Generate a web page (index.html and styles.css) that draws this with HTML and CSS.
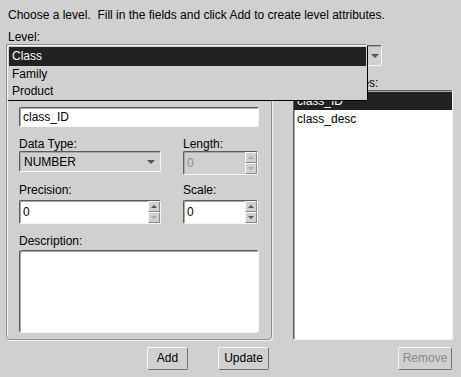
FILE: index.html
```html
<!DOCTYPE html>
<html>
<head>
    <title>Create Level Attributes</title>
    <link rel="stylesheet" href="styles.css">
</head>
<body>

<div class="screen">
    <p class="intro">Choose a level.&nbsp; Fill in the fields and click Add to create level attributes.</p>
    <div class="level-label">Level:</div>

    <!-- the value part is covered by the open popup below -->
    <div class="combo level-combo">
        <div class="combo-value selected"></div>
        <div class="combo-btn"><span class="arrow-down"></span></div>
    </div>

    <div class="main">
        <div class="panel">
            <div class="field name-field">class_ID</div>

            <div class="pair first-pair">
                <div class="col-left">
                    <div class="label">Data Type:</div>
                    <div class="combo type-combo">
                        <div class="combo-value">NUMBER</div>
                        <span class="arrow-down"></span>
                    </div>
                </div>
                <div class="col-right">
                    <div class="label">Length:</div>
                    <div class="spinner disabled">
                        <div class="spin-value">0</div>
                        <div class="spin-btns">
                            <div class="spin-btn"><span class="arrow-up off"></span></div>
                            <div class="spin-btn"><span class="arrow-dn off"></span></div>
                        </div>
                    </div>
                </div>
            </div>

            <div class="pair second-pair">
                <div class="col-left">
                    <div class="label">Precision:</div>
                    <div class="spinner">
                        <div class="spin-value">0</div>
                        <div class="spin-btns">
                            <div class="spin-btn"><span class="arrow-up"></span></div>
                            <div class="spin-btn"><span class="arrow-dn off"></span></div>
                        </div>
                    </div>
                </div>
                <div class="col-right">
                    <div class="label">Scale:</div>
                    <div class="spinner">
                        <div class="spin-value">0</div>
                        <div class="spin-btns">
                            <div class="spin-btn"><span class="arrow-up"></span></div>
                            <div class="spin-btn"><span class="arrow-dn"></span></div>
                        </div>
                    </div>
                </div>
            </div>

            <div class="label desc-label">Description:</div>
            <div class="field desc-field"></div>
        </div>

        <div class="attrs">
            <div class="label">Level Attributes:</div>
            <ul class="list">
                <li class="selected">class_ID</li>
                <li>class_desc</li>
            </ul>
        </div>
    </div>

    <div class="buttons">
        <div class="btn-group">
            <div class="btn add-btn">Add</div>
            <div class="btn update-btn">Update</div>
        </div>
        <div class="btn remove-btn disabled">Remove</div>
    </div>

    <!-- open dropdown of the Level combo -->
    <ul class="popup">
        <li class="selected">Class</li>
        <li>Family</li>
        <li>Product</li>
    </ul>
</div>

</body>
</html>
```

FILE: styles.css
```css
body {
    margin: 0;
    background-color: #d0d0d0;
    font-family: "Liberation Sans", Arial, sans-serif;
    font-size: 12px;
    color: #000;
}

.screen {
    position: relative;
    width: 461px;
    height: 377px;
    padding: 8px 8px 0 6px;
    box-sizing: border-box;
    line-height: 14px;
}

.intro {
    margin: 0 0 0 2px;
}

.level-label {
    margin: 8px 0 0 2px;
}

.selected {
    background-color: #222;
    color: #fff;
}

/* sunken boxes */
.field,
.combo,
.spinner,
.list {
    box-sizing: border-box;
    border: 1px solid;
    border-color: #5c5c5c #f6f6f6 #f6f6f6 #5c5c5c;
    border-radius: 2px;
    box-shadow: inset 1px 1px 0 #a8a8a8;
}

.combo {
    display: flex;
    align-items: center;
}

.level-combo {
    margin-top: 1px;
    width: 376px;
    height: 21px;
}

.level-combo .combo-value {
    flex: 1;
    height: 100%;
}

.combo-btn {
    width: 14px;
    height: 19px;
    display: flex;
    align-items: center;
    justify-content: center;
    border-left: 1px solid #fff;
    box-sizing: border-box;
}

.arrow-down {
    width: 0;
    height: 0;
    border-left: 4px solid transparent;
    border-right: 4px solid transparent;
    border-top: 4px solid #555;
}

.main {
    display: flex;
    gap: 21px;
    margin-top: 10px;
}

.panel {
    width: 266px;
    height: 260px;
    margin-top: 4px;
    box-sizing: border-box;
    border: 1px solid #8e8e8e;
    border-radius: 4px;
    box-shadow: inset 1px 1px 0 #f2f2f2, 1px 1px 0 #f2f2f2;
    padding: 26px 12px 0 12px;
}

.label {
    height: 14px;
}

.field {
    background: #fff;
    padding-left: 3px;
}

.name-field {
    width: 240px;
    height: 20px;
    line-height: 18px;
}

.pair {
    display: flex;
    gap: 22px;
    align-items: flex-start;
}

.first-pair {
    margin-top: 10px;
}

.second-pair {
    margin-top: 8px;
}

.second-pair .spinner {
    margin-top: 3px;
}

.col-left {
    width: 142px;
}

.col-right {
    width: 75px;
}

.type-combo {
    height: 21px;
    padding: 0 5px 0 4px;
    justify-content: space-between;
}

.spinner {
    display: flex;
    height: 24px;
    background: #fff;
}

.spinner.disabled {
    background: #d0d0d0;
    color: #8a8a8a;
}

.spin-value {
    flex: 1;
    padding-left: 3px;
    line-height: 22px;
}

.spin-btns {
    width: 12px;
    display: flex;
    flex-direction: column;
    background: #d0d0d0;
}

.spin-btn {
    flex: 1;
    display: flex;
    align-items: center;
    justify-content: center;
    border: 1px solid;
    border-color: #f6f6f6 #8a8a8a #8a8a8a #f6f6f6;
}

.arrow-up,
.arrow-dn {
    width: 0;
    height: 0;
    border-left: 3px solid transparent;
    border-right: 3px solid transparent;
}

.arrow-up {
    border-bottom: 3px solid #555;
}

.arrow-dn {
    border-top: 3px solid #555;
}

.arrow-up.off {
    border-bottom-color: #a8a8a8;
}

.arrow-dn.off {
    border-top-color: #a8a8a8;
}

.desc-label {
    margin-top: 10px;
}

.desc-field {
    margin-top: 2px;
    width: 240px;
    height: 83px;
    border-radius: 3px;
}

.attrs {
    width: 160px;
}

.list {
    list-style: none;
    margin: 0;
    padding: 1px 0 0 0;
    height: 250px;
    background: #fff;
}

.list li {
    height: 18px;
    line-height: 18px;
    padding-left: 3px;
}

.buttons {
    display: flex;
    margin-top: 7px;
}

.btn-group {
    width: 266px;
    display: flex;
    justify-content: flex-end;
    gap: 30px;
    padding-right: 3px;
    box-sizing: border-box;
}

.btn {
    box-sizing: border-box;
    height: 23px;
    line-height: 21px;
    text-align: center;
    border: 1px solid;
    border-color: #f6f6f6 #707070 #707070 #f6f6f6;
    border-radius: 2px;
}

.add-btn {
    width: 41px;
}

.update-btn {
    width: 51px;
}

.remove-btn {
    width: 54px;
    margin-left: auto;
    margin-right: 1px;
}

.btn.disabled {
    color: #8a8a8a;
}

.popup {
    position: absolute;
    left: 7px;
    top: 45px;
    width: 361px;
    margin: 0;
    padding: 1px 1px 0 1px;
    list-style: none;
    box-sizing: border-box;
    background: #d0d0d0;
    border: 1px solid;
    border-color: #f6f6f6 #000 #000 #f6f6f6;
    border-radius: 2px;
    box-shadow: -1px -1px 0 #8e8e8e;
}

.popup li {
    height: 17px;
    line-height: 17px;
    padding-left: 3px;
}

.popup li.selected {
    height: 19px;
    line-height: 19px;
}
```
